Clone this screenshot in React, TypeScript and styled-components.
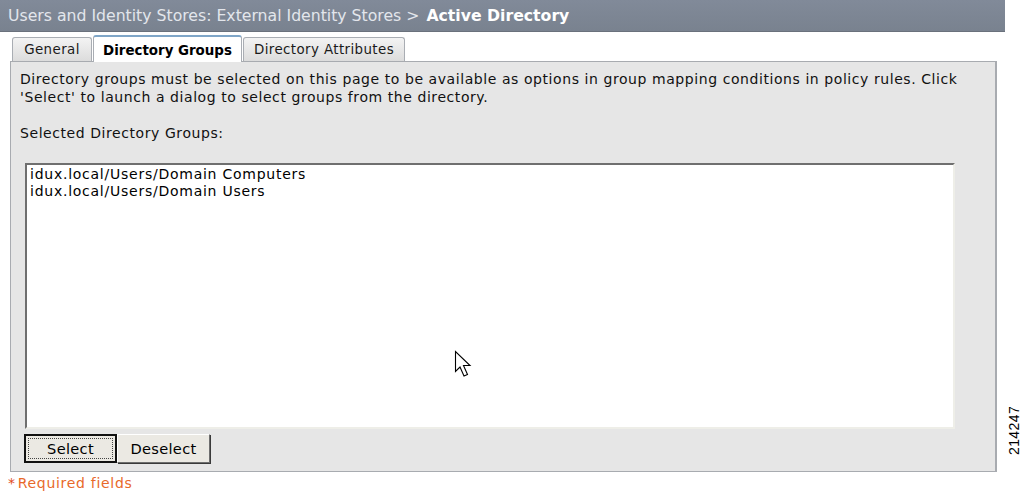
import React from 'react';
import styled, { createGlobalStyle, css } from 'styled-components';

const GlobalStyle = createGlobalStyle`
  html, body {
    margin: 0;
    padding: 0;
    background: #ffffff;
  }
  body {
    font-family: "DejaVu Sans", Verdana, sans-serif;
    width: 1025px;
    height: 500px;
    overflow: hidden;
  }
`;

const Page = styled.div`
  position: relative;
  width: 1025px;
  height: 500px;
`;

const TitleBar = styled.div`
  width: 1005px;
  height: 32px;
  box-sizing: border-box;
  padding: 0 0 0 8px;
  display: flex;
  align-items: center;
  background: linear-gradient(#818a99, #79828f);
  border-bottom: 1px solid #6a717c;
  font-size: 15.7px;
  color: #e6e8ee;
  white-space: nowrap;
`;

const Crumb = styled.span`
  color: #e3e6ec;
`;

const Current = styled.span`
  font-weight: bold;
  color: #ffffff;
  margin-left: 7px;
`;

const Body = styled.div`
  padding: 3px 0 0 10px;
  width: 987px;
`;

const TabRow = styled.div`
  display: flex;
  align-items: flex-end;
  height: 26px;
  gap: 1px;
  padding-left: 2px;
`;

const Tab = styled.div<{ $width: number; $active?: boolean }>`
  box-sizing: border-box;
  width: ${({ $width }) => $width}px;
  height: 24px;
  display: flex;
  align-items: center;
  justify-content: center;
  font-size: 13.4px;
  letter-spacing: 0.4px;
  color: #1a1a1a;
  background: linear-gradient(#f3f3f3, #dcdcdc);
  border: 1px solid #a9adb3;
  border-bottom: none;
  border-radius: 3px 3px 0 0;
  ${({ $active }) =>
    $active &&
    css`
      height: 27px;
      background: #ffffff;
      font-weight: bold;
      letter-spacing: 0;
      color: #000;
      border-top: 2px solid #7fa6c8;
      margin-bottom: -1px;
      padding-top: 2px;
      z-index: 1;
    `}
`;

const Panel = styled.div`
  box-sizing: border-box;
  width: 987px;
  height: 411px;
  background: #e6e6e6;
  border: 1px solid #a8abb0;
  border-right: 2px solid #a8abb0;
  padding: 8px 0 0 9px;
  font-size: 14px;
  letter-spacing: 0.57px;
  color: #111;
  line-height: 18px;
`;

const Intro = styled.p`
  margin: 0;
  width: 965px;
`;

const Label = styled.p`
  margin: 18px 0 0 0;
`;

const ListBox = styled.div`
  box-sizing: border-box;
  margin: 21px 0 0 5px;
  width: 930px;
  height: 266px;
  background: #ffffff;
  border-top: 2px solid #6f6f6f;
  border-left: 2px solid #6f6f6f;
  border-right: 2px solid #eeeee8;
  border-bottom: 2px solid #eeeee8;
  padding: 1px 0 0 3px;
  line-height: 17px;
  letter-spacing: 0.75px;
  color: #000;
`;

const ButtonRow = styled.div`
  display: flex;
  margin: 5px 0 0 4px;
`;

const Button = styled.div<{ $focused?: boolean }>`
  box-sizing: border-box;
  height: 29px;
  width: 93px;
  display: flex;
  align-items: center;
  justify-content: center;
  font-size: 14.6px;
  letter-spacing: 0.3px;
  color: #000;
  background: #ebe9e3;
  border: 1px solid;
  border-color: #ffffff #6e6e6e #6e6e6e #ffffff;
  box-shadow: 1px 1px 0 #3a3a3a;
  ${({ $focused }) =>
    $focused &&
    css`
      border: 2px solid #111;
      box-shadow: none;
      position: relative;
      &::after {
        content: '';
        position: absolute;
        inset: 2px;
        border: 1px dotted #444;
      }
    `}
`;

const Required = styled.div`
  margin: 3px 0 0 -2px;
  font-size: 14px;
  letter-spacing: 0.7px;
  color: #e8692a;
`;

const Star = styled.span`
  color: #e04a1c;
  margin-right: 2px;
`;

const FigureId = styled.div`
  position: absolute;
  left: 1005px;
  top: 430px;
  transform: rotate(-90deg);
  transform-origin: left top;
  font-family: "Liberation Sans", Arial, sans-serif;
  font-size: 14px;
  letter-spacing: 0.4px;
  color: #000;
  line-height: 18px;
  width: 0;
  white-space: nowrap;
`;

const FigureIdInner = styled.span`
  display: inline-block;
  transform: translateX(-25px);
`;

const Cursor = styled.svg`
  position: absolute;
  left: 454px;
  top: 350px;
`;

export default function App() {
  return (
    <Page>
      <GlobalStyle />
      <TitleBar>
        <Crumb>Users and Identity Stores: External Identity Stores &gt;</Crumb>
        <Current>Active Directory</Current>
      </TitleBar>
      <Body>
        <TabRow>
          <Tab $width={80}>General</Tab>
          <Tab $active $width={149}>Directory Groups</Tab>
          <Tab $width={162}>Directory Attributes</Tab>
        </TabRow>
        <Panel>
          <Intro>
            Directory groups must be selected on this page to be available as options in group mapping
            conditions in policy rules. Click 'Select' to launch a dialog to select groups from the
            directory.
          </Intro>
          <Label>Selected Directory Groups:</Label>
          <ListBox>
            <div>idux.local/Users/Domain Computers</div>
            <div>idux.local/Users/Domain Users</div>
          </ListBox>
          <ButtonRow>
            <Button $focused>Select</Button>
            <Button>Deselect</Button>
          </ButtonRow>
        </Panel>
        <Required>
          <Star>*</Star>Required fields
        </Required>
      </Body>
      <FigureId>
        <FigureIdInner>214247</FigureIdInner>
      </FigureId>
      <Cursor width="19" height="28" viewBox="0 0 19 28">
        <path
          d="M1.5 1.5 L1.5 21.5 L6 17 L10 26 L13.5 24.5 L9.5 15.5 L16 15.5 Z"
          fill="#ffffff"
          stroke="#000000"
          strokeWidth="1.1"
          strokeLinejoin="miter"
        />
      </Cursor>
    </Page>
  );
}
